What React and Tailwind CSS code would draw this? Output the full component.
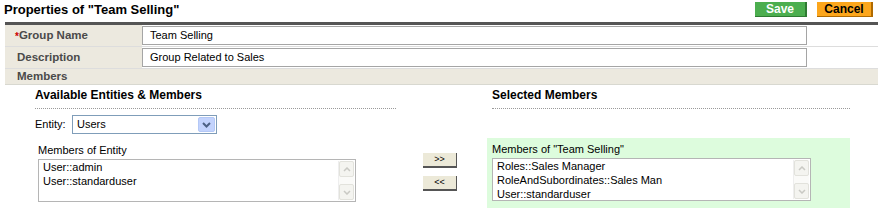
import React from 'react';

function Scrollbar() {
  return (
    <div className="w-[16px] my-[1px] flex flex-col border-l border-[#eeeeee] bg-[#fafaf8]">
      <div className="h-[16px] flex items-center justify-center border border-[#e2e2dc] bg-[#f4f4f0] rounded-[2px]">
        <svg width="8" height="5" viewBox="0 0 8 5">
          <path d="M1 4 L4 1 L7 4" stroke="#c9c9c4" strokeWidth="1.5" fill="none" />
        </svg>
      </div>
      <div className="flex-1" />
      <div className="h-[16px] flex items-center justify-center border border-[#e2e2dc] bg-[#f4f4f0] rounded-[2px]">
        <svg width="8" height="5" viewBox="0 0 8 5">
          <path d="M1 1 L4 4 L7 1" stroke="#c9c9c4" strokeWidth="1.5" fill="none" />
        </svg>
      </div>
    </div>
  );
}

function ListBox({ items, width }) {
  return (
    <div className={`flex bg-white border border-[#b5b5b5] h-[43px] px-[1px] ${width}`}>
      <div className="flex-1 pl-[3px] leading-[14px] text-[11px] text-black">
        {items.map((item) => (
          <div key={item}>{item}</div>
        ))}
      </div>
      <Scrollbar />
    </div>
  );
}

function MoveButton({ label }) {
  return (
    <button className="w-[34px] h-[15px] bg-[#ece9d8] border-b-2 border-r border-[#555555] text-[9px] leading-[13px] text-black">
      {label}
    </button>
  );
}

export default function App() {
  return (
    <div className="w-[884px] h-[209px] bg-white overflow-hidden font-['Liberation_Sans',Arial,sans-serif] text-[11px] text-black">
      <div className="flex items-center justify-between h-[22px] pl-[4px] pr-[11px]">
        <h1 className="text-[13px] font-bold leading-none pb-[4px]">Properties of "Team Selling"</h1>
        <div className="flex gap-[10px] pb-[3px]">
          <button className="w-[52px] h-[15px] bg-[#4cae4f] border-r-2 border-b border-[#2f7a32] text-white font-bold text-[12px] leading-[14px]">
            Save
          </button>
          <button className="w-[56px] h-[15px] bg-[#fca61c] border-r-2 border-b border-[#b06a00] text-black font-bold text-[12px] leading-[14px]">
            Cancel
          </button>
        </div>
      </div>

      <div className="ml-[5px] w-[873px] border-t-[3px] border-[#555555]">
        <div className="flex h-[22px] border-b border-[#dddddd]">
          <div className="w-[137px] bg-[#ece9df] pl-[10px] flex items-center font-bold text-[#4a4a4a] text-[11.5px]">
            <span className="text-[#cc0000] text-[10px] self-start mt-[4px]">*</span>Group Name
          </div>
          <div className="flex-1 flex items-center">
            <div className="w-[665px] h-[19px] border border-[#a5a5a5] pl-[7px] text-[11px] leading-[17px]">Team Selling</div>
          </div>
        </div>
        <div className="flex h-[22px] border-b border-[#dddddd]">
          <div className="w-[137px] bg-[#ece9df] pl-[12px] flex items-center font-bold text-[#4a4a4a] text-[11.5px]">
            Description
          </div>
          <div className="flex-1 flex items-center">
            <div className="w-[665px] h-[19px] border border-[#a5a5a5] pl-[7px] text-[11px] leading-[17px]">Group Related to Sales</div>
          </div>
        </div>
        <div className="h-[16px] bg-[#ece9df] border-b border-[#d8d8d0] pl-[12px] font-bold text-[#4a4a4a] text-[11.5px] leading-[15px]">
          Members
        </div>

        <div className="flex">
          <div className="ml-[30px] w-[361px]">
            <div className="pt-[4px] pb-[6px] border-b border-dotted border-[#9a9a9a] font-bold text-[12px] leading-[13px]">
              Available Entities &amp; Members
            </div>
            <div className="flex items-center mt-[6px] h-[19px]">
              <span className="w-[37px] text-[11px]">Entity:</span>
              <div className="w-[145px] h-[19px] border border-[#7f9db9] flex items-center bg-white">
                <span className="flex-1 pl-[4px] text-[11px]">Users</span>
                <div className="w-[17px] h-[15px] mr-[1px] bg-[#c3d3fd] border border-[#b4c8f6] rounded-[2px] flex items-center justify-center">
                  <svg width="9" height="6" viewBox="0 0 9 6">
                    <path d="M1 1 L4.5 4.5 L8 1" stroke="#4d6185" strokeWidth="2" fill="none" />
                  </svg>
                </div>
              </div>
            </div>
            <div className="ml-[3px] mt-[9px] text-[11px] leading-[15px]">Members of Entity</div>
            <div className="ml-[3px] mt-[1px]">
              <ListBox items={['User::admin', 'User::standarduser']} width="w-[318px]" />
            </div>
          </div>

          <div className="ml-[27px] w-[34px] flex flex-col gap-[8px] pt-[68px]">
            <MoveButton label=">>" />
            <MoveButton label="<<" />
          </div>

          <div className="ml-[30px] w-[363px] flex flex-col">
            <div className="ml-[5px] pt-[4px] pb-[6px] border-b border-dotted border-[#9a9a9a] font-bold text-[12px] leading-[13px]">
              Selected Members
            </div>
            <div className="mt-[29px] h-[70px] bg-[#ddfcdd] pl-[5px] pt-[4px]">
              <div className="text-[11px] leading-[15px]">Members of "Team Selling"</div>
              <div className="mt-[1px]">
                <ListBox
                  items={['Roles::Sales Manager', 'RoleAndSubordinates::Sales Man', 'User::standarduser']}
                  width="w-[319px]"
                />
              </div>
            </div>
          </div>
        </div>
      </div>
    </div>
  );
}
